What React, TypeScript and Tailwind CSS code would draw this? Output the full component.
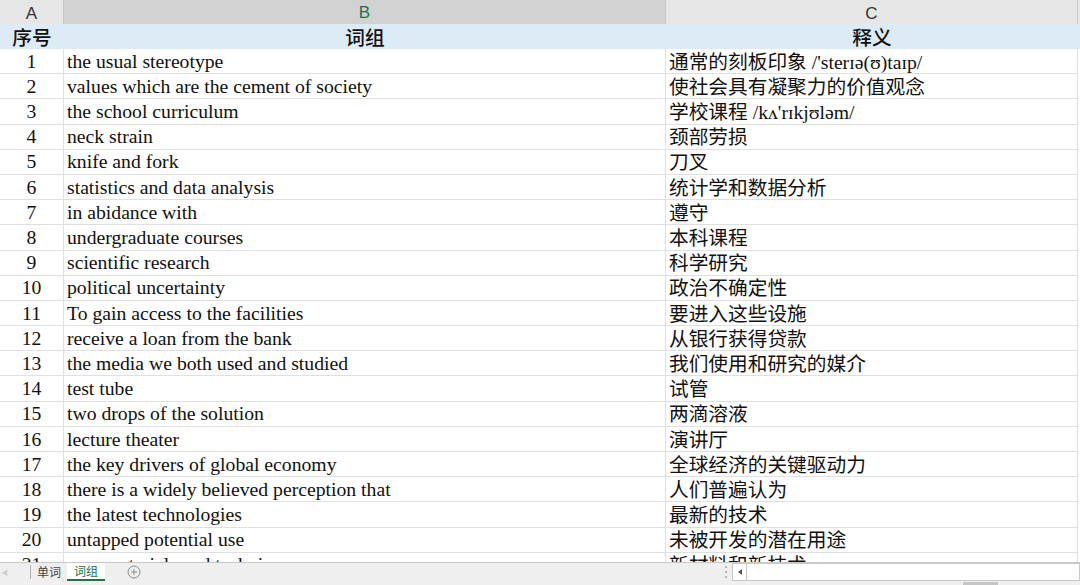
const rows: [string, string][] = [
  ["the usual stereotype", "通常的刻板印象 /'sterɪə(ʊ)taɪp/"],
  ["values which are the cement of society", "使社会具有凝聚力的价值观念"],
  ["the school curriculum", "学校课程 /kʌ'rɪkjʊləm/"],
  ["neck strain", "颈部劳损"],
  ["knife and fork", "刀叉"],
  ["statistics and data analysis", "统计学和数据分析"],
  ["in abidance with", "遵守"],
  ["undergraduate courses", "本科课程"],
  ["scientific research", "科学研究"],
  ["political uncertainty", "政治不确定性"],
  ["To gain access to the facilities", "要进入这些设施"],
  ["receive a loan from the bank", "从银行获得贷款"],
  ["the media we both used and studied", "我们使用和研究的媒介"],
  ["test tube", "试管"],
  ["two drops of the solution", "两滴溶液"],
  ["lecture theater", "演讲厅"],
  ["the key drivers of global economy", "全球经济的关键驱动力"],
  ["there is a widely believed perception that", "人们普遍认为"],
  ["the latest technologies", "最新的技术"],
  ["untapped potential use", "未被开发的潜在用途"],
  ["new materials and techniques", "新材料和新技术"],
]

const cellFont = "font-['Liberation_Serif','Noto_Sans_CJK_SC',serif] text-[19.7px] text-[#111]"

export default function App() {
  return (
    <div className="w-[1080px] h-[585px] overflow-hidden bg-white flex flex-col">
      {/* column letters */}
      <div className="grid grid-cols-[64px_602px_412px_2px] h-[24px] shrink-0 font-['Liberation_Sans',sans-serif] text-[17px] text-[#333]">
        <div className="bg-[#e6e6e6] border-r border-b border-[#c8c8c8] flex items-center justify-center">A</div>
        <div className="bg-[#d2d2d2] border-r border-[#c8c8c8] border-b-2 border-b-[#217346] flex items-center justify-center text-[#217346]">B</div>
        <div className="bg-[#e6e6e6] border-r border-b border-[#c8c8c8] flex items-center justify-center">C</div>
        <div className="bg-[#e6e6e6] border-b border-[#c8c8c8]" />
      </div>

      <div className="h-[538px] shrink-0 overflow-hidden">
        {/* title row */}
        <div className={`grid grid-cols-[64px_602px_412px] h-[25px] bg-[#ddebf7] font-medium ${cellFont}`}>
          <div className="flex items-center justify-center">序号</div>
          <div className="flex items-center justify-center">词组</div>
          <div className="flex items-center justify-center">释义</div>
        </div>

        {rows.map(([en, zh], i) => (
          <div key={i} className={`grid grid-cols-[64px_602px_412px] h-[25.2px] ${cellFont}`}>
            <div className="border-r border-b border-[#e0e0e0] flex items-center justify-center leading-none pt-[1px]">{i + 1}</div>
            <div className="border-r border-b border-[#e0e0e0] flex items-center pl-[3px] leading-none pt-[1px] whitespace-nowrap">{en}</div>
            <div className="border-r border-b border-[#e0e0e0] flex items-center pl-[3px] leading-none pt-[3px] whitespace-nowrap">{zh}</div>
          </div>
        ))}
      </div>

      {/* sheet tabs + scrollbar */}
      <div className="flex-1 flex flex-col bg-[#efefef] border-t border-[#c8c8c8] font-['Noto_Sans_CJK_SC',sans-serif] text-[12px] text-[#444]">
        <div className="flex items-stretch h-[18px]">
          <div className="w-[30px] flex items-center pl-[1px] text-[#d0d0d0] text-[7px] leading-none">◀</div>
          <div className="w-px my-[2px] bg-[#b0b0b0]" />
          <div className="w-[36px] flex items-center justify-center leading-none">单词</div>
          <div className="w-[38px] bg-white flex items-center justify-center leading-none text-[#217346] border-b-2 border-[#217346]">词组</div>
          <div className="w-[58px] flex items-center justify-center">
            <svg width="14" height="14" viewBox="0 0 14 14">
              <circle cx="7" cy="7" r="6" fill="none" stroke="#8a8a8a" strokeWidth="1" />
              <path d="M7 4v6M4 7h6" stroke="#8a8a8a" strokeWidth="1" />
            </svg>
          </div>
          <div className="flex-1" />
          <div className="w-[12px] flex flex-col items-center justify-center gap-[3px]">
            <span className="w-[2px] h-[2px] bg-[#b5b5b5]" />
            <span className="w-[2px] h-[2px] bg-[#b5b5b5]" />
            <span className="w-[2px] h-[2px] bg-[#b5b5b5]" />
          </div>
          <div className="w-[348px] bg-white border border-[#c8c8c8] flex">
            <div className="w-[14px] border-r border-[#c8c8c8] flex items-center justify-center">
              <svg width="4" height="6" viewBox="0 0 4 6"><path d="M4 0L0 3l4 3z" fill="#555" /></svg>
            </div>
          </div>
        </div>
        <div className="flex-1 flex items-end">
          <div className="ml-[963px] w-[35px] h-[3px] bg-[#c6c6c6]" />
        </div>
      </div>
    </div>
  )
}
